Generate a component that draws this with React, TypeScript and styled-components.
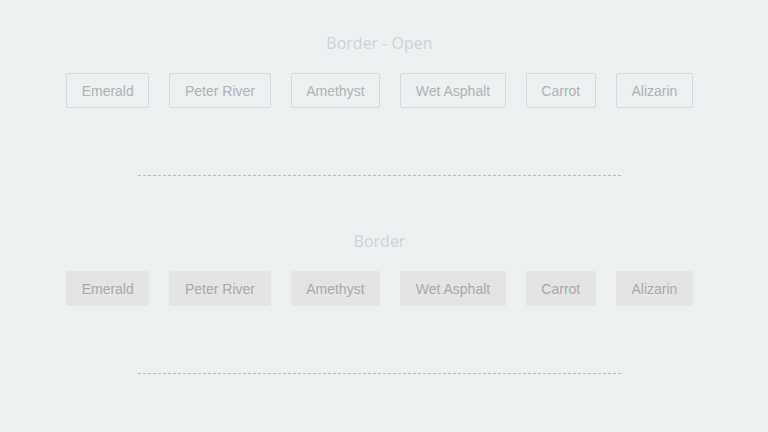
import styled, { createGlobalStyle } from "styled-components";

const colors = ["Emerald", "Peter River", "Amethyst", "Wet Asphalt", "Carrot", "Alizarin"];

const GlobalStyle = createGlobalStyle`
  html, body {
    margin: 0;
    padding: 0;
    background: #ecf0f1;
  }
`;

const App = () => {
  return (
    <Page>
      <GlobalStyle />
      <Section>
        <Heading>Border - Open</Heading>
        <Row>
          {colors.map((c) => (
            <Button key={c} $filled={false}>
              {c}
            </Button>
          ))}
        </Row>
        <Divider />
      </Section>
      <Section>
        <Heading>Border</Heading>
        <Row>
          {colors.map((c) => (
            <Button key={c} $filled>
              {c}
            </Button>
          ))}
        </Row>
        <Divider />
      </Section>
    </Page>
  );
};

const Page = styled.div`
  width: 768px;
  height: 432px;
  padding-top: 33px;
  box-sizing: border-box;
  overflow: hidden;
`;

const Section = styled.section`
  display: flex;
  flex-direction: column;
  align-items: center;
  padding-right: 9px;
  padding-bottom: 55px;
`;

const Heading = styled.h2`
  margin: 0 0 20px;
  height: 20px;
  line-height: 20px;
  font-family: "Open Sans", sans-serif;
  font-size: 16px;
  font-weight: 400;
  color: #cfd3d5;
`;

const Row = styled.div`
  display: flex;
  gap: 20px;
`;

const Button = styled.button<{ $filled: boolean }>`
  height: 35px;
  box-sizing: border-box;
  padding: 0 14.6px;
  border-radius: 2px;
  border: 1px solid ${(p) => (p.$filled ? "#e4e4e4" : "#d6d9db")};
  background: ${(p) => (p.$filled ? "#e4e4e4" : "transparent")};
  color: ${(p) => (p.$filled ? "#a9a9a9" : "#b1b3b4")};
  font-family: "Liberation Sans", Arial, sans-serif;
  font-size: 14px;
  cursor: pointer;
`;

const Divider = styled.div`
  width: 484px;
  height: 1px;
  margin-top: 67px;
  background-image: linear-gradient(to right, #b9bcbe 3px, transparent 3px);
  background-size: 5px 1px;
`;

export default App;
